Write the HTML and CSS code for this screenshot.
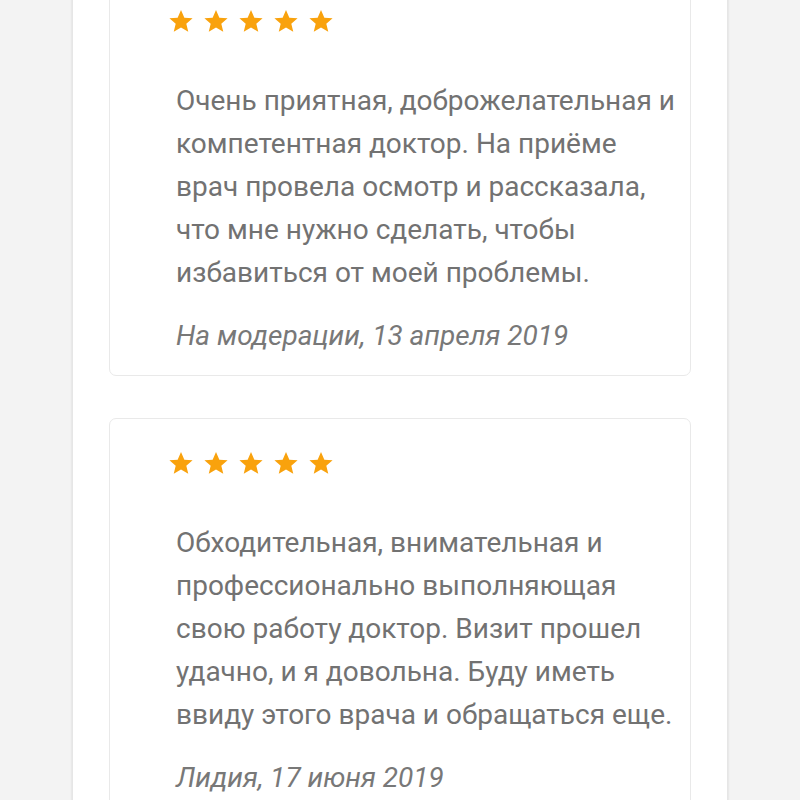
FILE: index.html
```html
<!DOCTYPE html>
<html lang="ru">
<head>
    <meta charset="UTF-8">
    <meta name="viewport" content="width=device-width, initial-scale=1.0">
    <title>Отзывы</title>
    <link rel="stylesheet" href="styles.css">
</head>
<body>
    <div class="page">
        <!-- список отзывов -->
        <div class="reviews">
            <div class="review">
                <div class="stars">
                    <svg viewBox="0 0 24 24"><path d="M12 1.8l3.1 7.1 7.6.6-5.8 5 1.8 7.5L12 18l-6.7 4 1.8-7.5-5.8-5 7.6-.6z"/></svg>
                    <svg viewBox="0 0 24 24"><path d="M12 1.8l3.1 7.1 7.6.6-5.8 5 1.8 7.5L12 18l-6.7 4 1.8-7.5-5.8-5 7.6-.6z"/></svg>
                    <svg viewBox="0 0 24 24"><path d="M12 1.8l3.1 7.1 7.6.6-5.8 5 1.8 7.5L12 18l-6.7 4 1.8-7.5-5.8-5 7.6-.6z"/></svg>
                    <svg viewBox="0 0 24 24"><path d="M12 1.8l3.1 7.1 7.6.6-5.8 5 1.8 7.5L12 18l-6.7 4 1.8-7.5-5.8-5 7.6-.6z"/></svg>
                    <svg viewBox="0 0 24 24"><path d="M12 1.8l3.1 7.1 7.6.6-5.8 5 1.8 7.5L12 18l-6.7 4 1.8-7.5-5.8-5 7.6-.6z"/></svg>
                </div>
                <p class="text">Очень приятная, доброжелательная и компетентная доктор. На приёме врач провела осмотр и рассказала, что мне нужно сделать, чтобы избавиться от моей проблемы.</p>
                <p class="author">На модерации, 13 апреля 2019</p>
            </div>

            <div class="review">
                <div class="stars">
                    <svg viewBox="0 0 24 24"><path d="M12 1.8l3.1 7.1 7.6.6-5.8 5 1.8 7.5L12 18l-6.7 4 1.8-7.5-5.8-5 7.6-.6z"/></svg>
                    <svg viewBox="0 0 24 24"><path d="M12 1.8l3.1 7.1 7.6.6-5.8 5 1.8 7.5L12 18l-6.7 4 1.8-7.5-5.8-5 7.6-.6z"/></svg>
                    <svg viewBox="0 0 24 24"><path d="M12 1.8l3.1 7.1 7.6.6-5.8 5 1.8 7.5L12 18l-6.7 4 1.8-7.5-5.8-5 7.6-.6z"/></svg>
                    <svg viewBox="0 0 24 24"><path d="M12 1.8l3.1 7.1 7.6.6-5.8 5 1.8 7.5L12 18l-6.7 4 1.8-7.5-5.8-5 7.6-.6z"/></svg>
                    <svg viewBox="0 0 24 24"><path d="M12 1.8l3.1 7.1 7.6.6-5.8 5 1.8 7.5L12 18l-6.7 4 1.8-7.5-5.8-5 7.6-.6z"/></svg>
                </div>
                <p class="text">Обходительная, внимательная и профессионально выполняющая свою работу доктор. Визит прошел удачно, и я довольна. Буду иметь ввиду этого врача и обращаться еще.</p>
                <p class="author">Лидия, 17 июня 2019</p>
            </div>
        </div>
    </div>
</body>
</html>
```

FILE: styles.css
```css
html, body {
    margin: 0;
    padding: 0;
    height: 100%;
    overflow: hidden;
    background-color: #f3f3f3;
    font-family: Roboto, "Liberation Sans", sans-serif;
}

.page {
    width: 656px;
    min-height: 100%;
    margin: 0 auto;
    background-color: #fff;
    box-shadow: 0 0 2px rgba(0, 0, 0, 0.12);
    border-left: 1px solid #e6e6e6;
    border-right: 1px solid #e6e6e6;
    box-sizing: border-box;
}

/* список отзывов */
.reviews {
    display: flex;
    flex-direction: column;
    gap: 42px;
    padding: 0 36px;
    margin-top: -24px;
}

.review {
    border: 1.5px solid #e9e9e9;
    border-radius: 7px;
    padding: 31px 8px 18px 66px;
    background-color: #fff;
}

.stars {
    display: flex;
    gap: 9px;
    margin-left: -8px;
}

.stars svg {
    width: 26px;
    height: 26px;
    fill: #f9a20d;
}

.text {
    margin: 45px 0 0;
    font-size: 28px;
    line-height: 43px;
    color: #727272;
}

.author {
    margin: 20px 0 0;
    font-size: 28px;
    line-height: 43px;
    font-style: italic;
    color: #787878;
}
```
